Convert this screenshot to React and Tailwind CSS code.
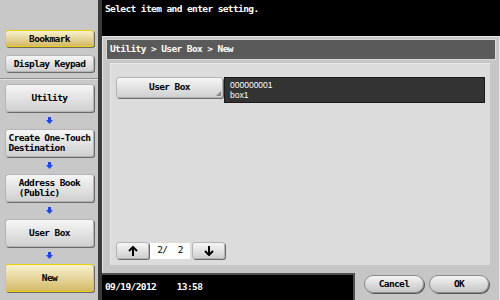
import React from "react";

const BlueArrow = () => (
    <div className="h-[17px] w-[89px] flex items-center justify-center">
        <svg width="7" height="7" viewBox="0 0 7 7">
            <path d="M2 0h3v3h2L3.5 7 0 3h2z" fill="#1846ff" />
        </svg>
    </div>
);

const SideButton = ({ children, active, small }) => (
    <div
        className={`w-[89px] rounded-[3px] border flex items-center justify-center font-bold text-[9.5px] leading-[10px] tracking-[-0.6px] text-black shadow-[1px_1px_0_#6a6a6a] ${
            small ? "h-[17px]" : "h-[28px]"
        } ${
            active
                ? "border-[#f0cc00] bg-gradient-to-b from-[#f8f2cf] to-[#d4ba66]"
                : "border-[#b4b4b4] bg-gradient-to-b from-[#f6f6f6] to-[#d0d0d0]"
        }`}
    >
        <span className="inline-block text-left whitespace-pre">{children}</span>
    </div>
);

const NavArrow = ({ down }) => (
    <svg width="10" height="10" viewBox="0 0 10 10">
        {down ? (
            <g stroke="#000" strokeWidth="2" fill="none">
                <path d="M5 0v9" />
                <path d="M1 5l4 4 4-4" />
            </g>
        ) : (
            <g stroke="#000" strokeWidth="2" fill="none">
                <path d="M5 10V1" />
                <path d="M1 5l4-4 4 4" />
            </g>
        )}
    </svg>
);

const PillButton = ({ children }) => (
    <div className="w-[60px] h-[18px] rounded-full border border-[#8c8c8c] bg-gradient-to-b from-[#f4f4f4] to-[#c6c6c6] shadow-[1px_1px_0_#555] flex items-center justify-center font-bold text-[9.5px] tracking-[-0.6px] text-black">
        {children}
    </div>
);

export default function App() {
    return (
        <div className="w-[500px] h-[300px] flex bg-black overflow-hidden font-['DejaVu_Sans_Mono','Liberation_Mono',monospace]">
            {/* left column */}
            <div className="w-[98px] h-full bg-[#c8c8c8] flex flex-col">
                <div className="pl-[5px] pt-[30px] flex flex-col gap-[8px]">
                    <SideButton active small>Bookmark</SideButton>
                    <SideButton small>Display Keypad</SideButton>
                </div>
                <div className="mt-[6px] h-px bg-[#8e8e8e]" />
                <div className="h-px bg-[#e2e2e2]" />
                <div className="pl-[5px] pt-[4px] flex flex-col">
                    <SideButton>Utility</SideButton>
                    <BlueArrow />
                    <SideButton>{"Create One-Touch\nDestination"}</SideButton>
                    <BlueArrow />
                    <SideButton>{"Address Book\n(Public)"}</SideButton>
                    <BlueArrow />
                    <SideButton>User Box</SideButton>
                    <BlueArrow />
                    <SideButton active>New</SideButton>
                </div>
            </div>

            {/* main */}
            <div className="flex-1 h-full flex flex-col border-l-4 border-[#3a3a3a]">
                <div className="h-[36px] pl-[3px] pt-[3px] text-white font-bold text-[9.5px] leading-[11px] tracking-[-0.6px]">
                    Select item and enter setting.
                </div>
                <div className="flex-1 flex flex-col bg-[#c6c6c6] border-l border-t border-r border-[#e6e6e6]">
                    <div className="mx-[3px] mt-[2px] h-[21px] bg-[#5a5a5a] border border-[#d8d8d8] flex items-center pl-[3px] text-white font-bold text-[9.5px] tracking-[-0.6px]">
                        Utility &gt; User Box &gt; New
                    </div>
                    <div className="ml-[7px] mr-[9px] mt-[3px] h-[202px] bg-[#dcdcdc] border-t border-l border-[#e8e8e8] flex flex-col px-[5px] pt-[13px] pb-[6px]">
                        <div className="flex">
                            <div className="relative w-[107px] h-[21px] rounded-[3px] border border-[#b4b4b4] bg-gradient-to-b from-[#f6f6f6] to-[#d0d0d0] shadow-[1px_1px_0_#6a6a6a] flex items-center justify-center font-bold text-[9.5px] tracking-[-0.6px] text-black">
                                User Box
                                <svg className="absolute right-[1px] bottom-[1px]" width="5" height="5" viewBox="0 0 5 5">
                                    <path d="M5 0v5H0z" fill="#8a8a8a" />
                                </svg>
                            </div>
                            <div className="ml-[1px] w-[261px] h-[26px] bg-[#333] border border-[#1a1a1a] pl-[5px] pt-[2px] font-['Liberation_Sans',Arial,sans-serif] text-white text-[8.5px] leading-[10px]">
                                <div>000000001</div>
                                <div>box1</div>
                            </div>
                        </div>
                        <div className="mt-auto flex items-center">
                            <div className="w-[33px] h-[17px] rounded-[3px] border border-[#b4b4b4] bg-gradient-to-b from-[#f6f6f6] to-[#d0d0d0] shadow-[1px_1px_0_#6a6a6a] flex items-center justify-center">
                                <NavArrow />
                            </div>
                            <div className="ml-px w-[40px] h-[16px] bg-white flex items-center justify-center text-[9.5px] tracking-[-0.6px] text-black whitespace-pre">
                                {"2/  2"}
                            </div>
                            <div className="ml-[2px] w-[33px] h-[17px] rounded-[3px] border border-[#b4b4b4] bg-gradient-to-b from-[#f6f6f6] to-[#d0d0d0] shadow-[1px_1px_0_#6a6a6a] flex items-center justify-center">
                                <NavArrow down />
                            </div>
                        </div>
                    </div>
                    <div className="mt-[8px] flex-1 flex">
                        <div className="w-[253px] -ml-px bg-black border-t-2 border-r-2 border-[#4e4e4e] flex items-center pl-[3px] text-white font-bold text-[9.5px] tracking-[-0.6px] whitespace-pre">
                            {"09/19/2012    13:58"}
                        </div>
                        <div className="ml-[9px] mt-[2px] flex gap-[5px]">
                            <PillButton>Cancel</PillButton>
                            <PillButton>OK</PillButton>
                        </div>
                    </div>
                </div>
            </div>
        </div>
    );
}
